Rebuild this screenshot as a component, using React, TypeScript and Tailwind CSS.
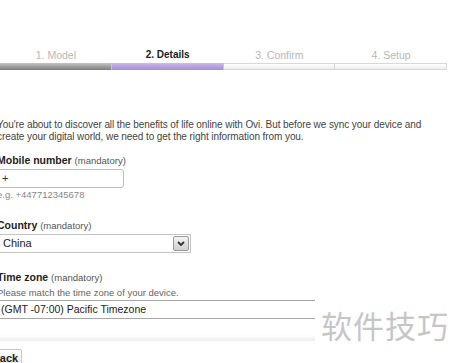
const steps = ['1. Model', '2. Details', '3. Confirm', '4. Setup'];

function StepBar() {
  return (
    <div className="pt-[48px]">
      <div className="flex w-[447px]">
        {steps.map((s, i) => (
          <div key={s} className="flex-1 flex flex-col items-center">
            <span
              className={
                i === 1
                  ? 'text-[10px] font-bold text-[#222] leading-[14px]'
                  : 'text-[10.5px] text-[#b8b8b8] leading-[14px]'
              }
            >
              {s}
            </span>
            <div
              className={
                'mt-[1px] h-[7px] w-full border-r border-[#c8c8c8] ' +
                (i === 0
                  ? 'bg-gradient-to-b from-[#c4c4c4] to-[#7e7e7e]'
                  : i === 1
                  ? 'bg-gradient-to-b from-[#c9bbe8] to-[#a48fd6]'
                  : 'bg-gradient-to-b from-white to-[#ececec] border-t border-b border-[#d8d8d8]')
              }
            />
          </div>
        ))}
      </div>
    </div>
  );
}

function Label({ name }: { name: string }) {
  return (
    <div className="text-[10.5px] leading-[14px] text-[#222]">
      <span className="font-bold">{name}</span>{' '}
      <span className="text-[9.5px] text-[#555]">(mandatory)</span>
    </div>
  );
}

export default function App() {
  return (
    <div className="w-[450px] h-[363px] overflow-hidden bg-white relative font-['Liberation_Sans',Arial,sans-serif] text-[#333]">
      <StepBar />
      <div className="ml-[-3px] mt-[49px]">
        <p className="text-[10px] leading-[12px] tracking-[-0.08px] text-[#444] w-[440px]">
          You're about to discover all the benefits of life online with Ovi. But before we sync your device and
          create your digital world, we need to get the right information from you.
        </p>

        <div className="mt-[10px]">
          <Label name="Mobile number" />
          <div className="mt-[1px] w-[127px] h-[19px] border border-[#bdbdbd] rounded-[3px] flex items-center pl-[4px] text-[11px] text-[#333]">
            +
          </div>
          <div className="mt-[1px] text-[9.5px] leading-[12px] text-[#888]">e.g. +447712345678</div>
        </div>

        <div className="mt-[17px]">
          <Label name="Country" />
          <div className="mt-[1px] w-[194px] h-[19px] border border-[#c4c4c4] flex items-center justify-between pl-[5px] pr-[1px]">
            <span className="text-[11px] text-[#222]">China</span>
            <span className="w-[16px] h-[15px] border border-[#9a9a9a] rounded-[2px] bg-gradient-to-b from-[#f4f4f4] to-[#cfcfcf] flex items-center justify-center">
              <svg width="8" height="6" viewBox="0 0 8 6">
                <path d="M1 1 L4 4 L7 1" stroke="#333" strokeWidth="1.8" fill="none" />
              </svg>
            </span>
          </div>
        </div>

        <div className="mt-[17px]">
          <Label name="Time zone" />
          <div className="mt-[2px] text-[9.5px] leading-[12px] text-[#666]">Please match the time zone of your device.</div>
          <div className="mt-[1px] w-[318px] h-[19px] border-t border-b border-[#a8a8a8] flex items-center pl-[4px] text-[10.5px] text-[#222]">
            (GMT -07:00) Pacific Timezone
          </div>
        </div>

        <div className="mt-[16px] w-[318px] h-[6px] bg-gradient-to-b from-white to-[#eeeeee]" />

        <div className="mt-[8px] ml-[-9px] w-[34px] h-[18px] border border-[#c8c8c8] rounded-[2px] bg-gradient-to-b from-white to-[#e6e6e6] flex items-center justify-center text-[11px] font-bold text-[#222]">
          Back
        </div>
      </div>

      <div className="absolute left-[321px] top-[307px] text-[31px] leading-[36px] text-[#c6c6c6] font-['Noto_Sans_CJK_SC',sans-serif] tracking-[1px]">
        软件技巧
      </div>
    </div>
  );
}
